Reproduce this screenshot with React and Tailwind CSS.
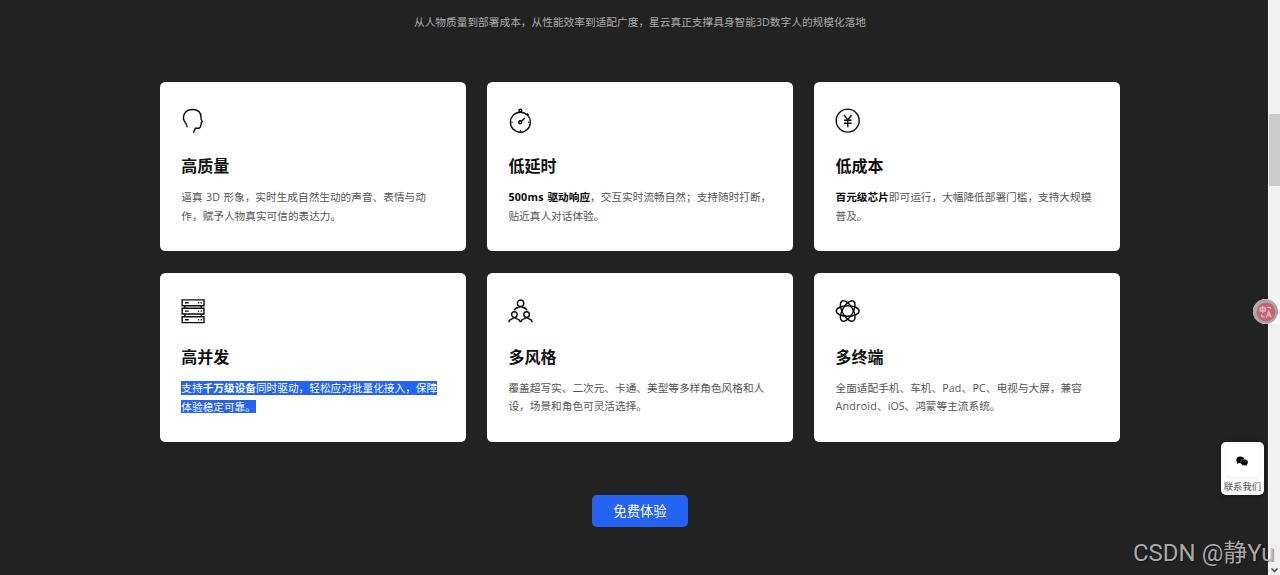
import React from 'react';

const svgProps = {
  viewBox: '0 0 24 24',
  fill: 'none',
  stroke: '#0c0c0c',
  strokeWidth: 1.4,
  className: 'block size-6 shrink-0 overflow-visible',
};

function HeadIcon() {
  return (
    <svg {...svgProps}>
      <path d="M6 18.2C6.6 16.4 5.4 15.2 4.4 13.8C2.4 11.1 2 7.8 3.2 5.2C5 1.4 8.2.5 11.8.5C17.2.5 20.2 3.6 20 8.2C19.5 9.6 20.1 10.4 21 11.8C21.6 12.6 21.4 13.1 20.3 13.5C20.5 14.8 20.2 15.6 19.8 16.6C19.3 18.8 19 19.2 17.7 19.2H14.4C14 21.2 13.3 22.2 12.2 23.6" />
    </svg>
  );
}

function StopwatchIcon() {
  return (
    <svg {...svgProps}>
      <circle cx="12.4" cy="13.2" r="10" />
      <circle cx="12.4" cy="1.6" r="1.4" />
      <path d="M10.6 3.2h3.6M18.8 4.4l1.9 1.9M13.4 12.2l3.4-3.3" />
      <path d="M3.2 13.2h1.6M20 13.2h1.6M12.4 21v1.6" strokeWidth="1" />
      <circle cx="12.2" cy="13.3" r="1.4" strokeWidth="1.6" />
    </svg>
  );
}

function YenIcon() {
  return (
    <svg {...svgProps}>
      <circle cx="11.7" cy="11.6" r="11.5" />
      <path d="M8.1 6l3.7 5 3.7-5M11.8 11v7.2M8 11.3h7.6M8 14.3h7.6" />
    </svg>
  );
}

function ServerIcon() {
  return (
    <svg {...svgProps}>
      <path d="M1.2.9h21.8v5.8H1.2zM1.2 9.2H23V15H1.2zM1.2 17.8H23v5.8H1.2zM3.9 6.7v2.5M20.3 6.7v2.5M3.9 15v2.8M20.3 15v2.8" />
      <path d="M3.9 3.8h3.7M16.9 3.8h1.3M19.5 3.8h1.3M3.9 12.1h3.7M16.9 12.1h1.3M19.5 12.1h1.3M3.9 20.7h3.7M16.9 20.7h1.3M19.5 20.7h1.3" />
    </svg>
  );
}

function TeamIcon() {
  return (
    <svg {...svgProps}>
      <circle cx="12.6" cy="4.2" r="3.2" />
      <path d="M6.4 11.4C6.4 9.2 8.2 8.9 10.4 8.4Q12.6 7 14.8 8.4C17 8.9 18.8 9.2 18.8 11.4" />
      <circle cx="6.4" cy="15.6" r="2.8" />
      <circle cx="18.6" cy="15.6" r="2.8" />
      <path d="M.9 23.3C.9 20.6 2.4 20.1 4.4 19.6Q6.4 18 8.4 19.6C10.4 20.1 12 20.6 12.1 23.3M12.9 23.3C13 20.6 14.6 20.1 16.6 19.6Q18.6 18 20.6 19.6C22.6 20.1 24.1 20.6 24.1 23.3" />
    </svg>
  );
}

function AtomIcon() {
  return (
    <svg {...svgProps}>
      <ellipse cx="11.7" cy="12" rx="11.4" ry="5.3" />
      <ellipse cx="11.7" cy="12" rx="11.4" ry="5.3" transform="rotate(60 11.7 12)" />
      <ellipse cx="11.7" cy="12" rx="11.4" ry="5.3" transform="rotate(120 11.7 12)" />
    </svg>
  );
}

const B = ({ children }) => <strong className="font-bold text-[#080808]">{children}</strong>;

const features = [
  {
    icon: <HeadIcon />,
    title: '高质量',
    lines: ['逼真 3D 形象，实时生成自然生动的声音、表情与动', '作，赋予人物真实可信的表达力。'],
  },
  {
    icon: <StopwatchIcon />,
    title: '低延时',
    lines: [<><B><span className="tracking-[0.25px]">500ms </span>驱动响应</B>，交互实时流畅自然；支持随时打断，</>, '贴近真人对话体验。'],
  },
  {
    icon: <YenIcon />,
    title: '低成本',
    lines: [<><B>百元级芯片</B>即可运行，大幅降低部署门槛，支持大规模</>, '普及。'],
  },
  {
    icon: <ServerIcon />,
    title: '高并发',
    selected: true,
    lines: [<>支持<strong className="font-bold">千万级设备</strong>同时驱动，轻松应对批量化接入，保障</>, '体验稳定可靠。'],
  },
  {
    icon: <TeamIcon />,
    title: '多风格',
    lines: ['覆盖超写实、二次元、卡通、美型等多样角色风格和人', '设，场景和角色可灵活选择。'],
  },
  {
    icon: <AtomIcon />,
    title: '多终端',
    lines: [
      <>全面适配手机、车机、<span className="tracking-[0.2px]">Pad、PC</span>、电视与大屏，兼容</>,
      <><span className="tracking-[0.25px]">Android</span>、iOS、鸿蒙等主流系统。</>,
    ],
  },
];

function FeatureCard({ icon, title, lines, selected }) {
  return (
    <article className="h-[169.33px] rounded-[5.33px] bg-white px-[21.33px] pt-[26.67px]">
      {icon}
      <h3 className="mt-[21.33px] text-[16px] leading-6 font-bold text-[#111]">{title}</h3>
      <div className="mt-[10px] text-[10.67px] leading-[18.67px] text-[#555] [word-spacing:0.7px]">
        {lines.map((line, i) => (
          <p key={i} className="flex h-[18.67px] items-center whitespace-nowrap">
            {selected ? (
              <span className="h-[13.67px] bg-[#2563f2] leading-[14.67px] text-white">{line}</span>
            ) : (
              <span>{line}</span>
            )}
          </p>
        ))}
      </div>
    </article>
  );
}

function ContactWidget() {
  return (
    <div className="absolute top-[442px] left-[1221px] flex h-[53px] w-[43px] flex-col items-center rounded-[5px] bg-white pt-[3px] shadow-[0_1px_5px_rgba(0,0,0,0.4)]">
      <div className="flex h-8 w-8 items-center justify-center rounded-[5px] bg-white pr-px pb-px shadow-[0_1px_4px_rgba(0,0,0,0.09)]">
        <svg viewBox="0 0 12 10" className="block h-[10px] w-3">
          <ellipse cx="4.3" cy="3.8" rx="3.9" ry="3.4" fill="#000" />
          <path d="M1.3 5.8L1 8l2.2-1.2z" fill="#000" />
          <ellipse cx="8.3" cy="6.3" rx="3.7" ry="3.1" fill="#000" stroke="#fff" strokeWidth=".3" />
          <path d="M10.6 8.2l.5 1.5-2.1-.8z" fill="#000" />
          <circle cx="3" cy="3" r=".35" fill="#fff" />
          <circle cx="5.7" cy="3" r=".35" fill="#fff" />
          <circle cx="7.2" cy="5.6" r=".3" fill="#fff" />
          <circle cx="9.5" cy="5.6" r=".3" fill="#fff" />
        </svg>
      </div>
      <span className="mt-[4px] text-[9.4px] leading-3 whitespace-nowrap text-[#555]">联系我们</span>
    </div>
  );
}

function TranslateBubble() {
  return (
    <div className="absolute top-[299px] left-[1253px] flex h-[25px] w-[27px] items-center rounded-l-full bg-[#f8f8f8]">
      <div className="flex size-[25px] shrink-0 items-center justify-center rounded-full bg-[#aaa8a9]">
        <svg viewBox="0 0 20 20" className="block size-5">
          <circle cx="10" cy="10" r="9.5" fill="#c46578" />
          <g fill="none" stroke="#dfb3bd" strokeWidth="1.3">
            <path d="M4.2 6h5v3h-5zM6.7 4v7M11.5 5.3h2.1q1.2 0 1.2 2M5.3 12.4q0 2.4 2.4 2.4h1M10.4 15.6l2.4-6.2 2.4 6.2M11.3 13.6h3" />
          </g>
        </svg>
      </div>
    </div>
  );
}

export default function App() {
  return (
    <div className="relative flex h-[575px] w-[1280px] overflow-hidden bg-[#222] font-['Open_Sans','Noto_Sans_CJK_SC',sans-serif]">
      <main className="flex h-full w-[1268px] shrink-0 flex-col items-center pl-3">
        <p className="mt-[13px] h-[18.67px] text-[10.7px] leading-[18.67px] whitespace-nowrap text-[#aaa]">
          从人物质量到部署成本，从性能效率到适配广度，星云真正支撑具身智能3D数字人的规模化落地
        </p>
        <section className="mt-[50.33px] grid w-[960px] shrink-0 grid-cols-3 gap-[21.33px]">
          {features.map((f) => (
            <FeatureCard key={f.title} {...f} />
          ))}
        </section>
        <button className="mt-[53px] h-8 w-24 shrink-0 rounded-[5px] bg-[#2563f2] text-[13.33px] leading-8 text-white">
          免费体验
        </button>
      </main>
      <aside className="flex h-full w-3 flex-col border-l border-white bg-[#f0f0f0] pt-[114px]">
        <div className="h-[72px] w-full bg-[#cbcbcb]" />
        <svg viewBox="0 0 11 8" className="mt-auto mb-[1px] block h-2 w-[11px]">
          <path d="M2.5 2.5l3 3 3-3" fill="none" stroke="#444" strokeWidth="1.5" />
        </svg>
      </aside>
      <TranslateBubble />
      <ContactWidget />
      <div className="absolute top-[537px] left-[1133px] font-['Roboto','Noto_Sans_CJK_SC',sans-serif] text-[24px] leading-8 font-normal whitespace-nowrap text-[#bdbdbd]/90 [text-shadow:1px_1px_1px_rgba(0,0,0,0.4)]">
        CSDN @静Yu
      </div>
    </div>
  );
}
